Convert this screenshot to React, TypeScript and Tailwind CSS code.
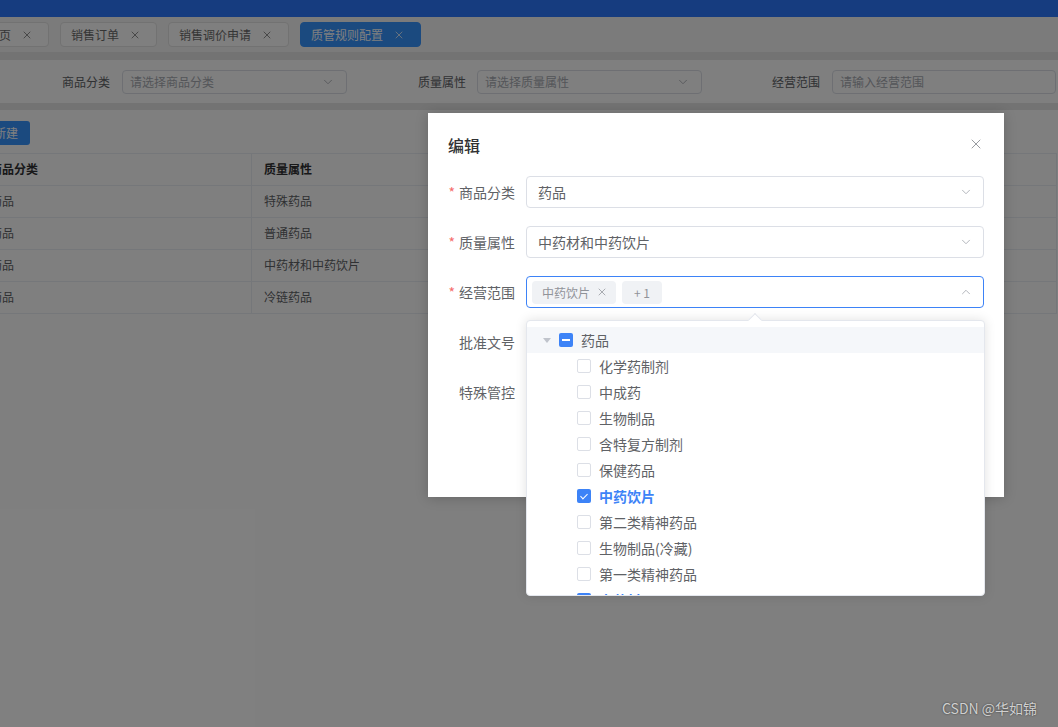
import { ChevronDown, ChevronUp, X } from 'lucide-react'

const tabs = [
  { label: '首页', active: false },
  { label: '销售订单', active: false },
  { label: '销售调价申请', active: false },
  { label: '质管规则配置', active: true },
]

const rows = [
  { category: '药品', quality: '特殊药品' },
  { category: '药品', quality: '普通药品' },
  { category: '药品', quality: '中药材和中药饮片' },
  { category: '药品', quality: '冷链药品' },
]

const scopes = [
  { label: '化学药制剂', checked: false },
  { label: '中成药', checked: false },
  { label: '生物制品', checked: false },
  { label: '含特复方制剂', checked: false },
  { label: '保健药品', checked: false },
  { label: '中药饮片', checked: true },
  { label: '第二类精神药品', checked: false },
  { label: '生物制品(冷藏)', checked: false },
  { label: '第一类精神药品', checked: false },
  { label: '中药材', checked: true },
  { label: '医疗器械', checked: false },
]

function Checkbox({ state }: { state: 'on' | 'off' | 'half' }) {
  if (state === 'off') {
    return <span className="h-[14px] w-[14px] shrink-0 rounded-[2px] border border-[#dcdfe6] bg-white" />
  }
  return (
    <span className="flex h-[14px] w-[14px] shrink-0 items-center justify-center rounded-[2px] bg-[#3d83f7]">
      {state === 'half' ? (
        <span className="h-[2px] w-[8px] bg-white" />
      ) : (
        <span className="mt-[-2px] h-[7px] w-[4px] rotate-45 border-b-[1.5px] border-r-[1.5px] border-white" />
      )}
    </span>
  )
}

function FilterSelect({ placeholder, width }: { placeholder: string; width: string }) {
  return (
    <div className={`flex h-[24px] items-center justify-between rounded-[4px] border border-[#dcdfe6] bg-white pl-[7px] pr-[11px] ${width}`}>
      <span className="text-[12px] leading-[22px] text-[#a8abb2]">{placeholder}</span>
      <ChevronDown size={14} strokeWidth={1.5} className="text-[#a8abb2]" />
    </div>
  )
}

function FormRow({ label, required, children }: { label: string; required?: boolean; children?: React.ReactNode }) {
  return (
    <div className="mb-[18px] flex h-[32px] items-center">
      <div className="w-[78px] shrink-0 pr-[11px] text-right text-[14px] leading-[31px] text-[#606266]">
        {required && <span className="mr-[4px] text-[#f56c6c]">*</span>}
        {label}
      </div>
      <div className="flex-1">{children}</div>
    </div>
  )
}

export default function App() {
  return (
    <div className="relative h-[727px] w-[1058px] overflow-hidden bg-white font-['Noto_Sans_CJK_SC',sans-serif] text-[#606266]">
      {/* top bar */}
      <div className="h-[17px] bg-[#2c78ff]" />

      {/* tabs */}
      <div className="flex h-[35px] items-center bg-[#f6f6f6]">
        <div className="ml-[-24px] flex gap-[11px]">
          {tabs.map((tab) => (
            <div
              key={tab.label}
              className={`flex h-[25px] items-center gap-[10px] rounded-[4px] border pl-[10px] pr-[15px] text-[12px] leading-[22px] ${
                tab.active ? 'border-[#3694ff] bg-[#3694ff] text-white' : 'border-[#e4e4e4] bg-white text-[#6b6b6b]'
              }`}
            >
              <span>{tab.label}</span>
              <X size={12} strokeWidth={1.5} />
            </div>
          ))}
        </div>
      </div>
      <div className="h-[8px] bg-[#e6e6e6]" />

      {/* filters */}
      <div className="flex h-[43px] items-center pl-[62px] text-[12px] text-[#606266]">
        <span className="mr-[12px]">商品分类</span>
        <FilterSelect placeholder="请选择商品分类" width="w-[225px]" />
        <span className="ml-[71px] mr-[11px]">质量属性</span>
        <FilterSelect placeholder="请选择质量属性" width="w-[225px]" />
        <span className="ml-[70px] mr-[12px]">经营范围</span>
        <div className="flex h-[24px] w-[224px] items-center rounded-[4px] border border-[#dcdfe6] bg-white pl-[7px]">
          <span className="text-[12px] leading-[22px] text-[#a8abb2]">请输入经营范围</span>
        </div>
      </div>
      <div className="h-[7px] bg-[#e6e6e6]" />

      {/* content */}
      <div className="pt-[11px]">
        <button className="ml-[-18px] block h-[24px] w-[48px] rounded-[3px] bg-[#3694ff] text-[12px] leading-[22px] text-white">
          新建
        </button>
        <div className="mt-[8px] ml-[-22px] w-[1079px] text-[12px] leading-[29px]">
          <div className="grid h-[33px] grid-cols-[274px_388px_220px_197px] border-y border-[#ebeef5] font-bold text-[#303133]">
            <div className="border-r border-[#ebeef5] px-[12px]">商品分类</div>
            <div className="border-r border-[#ebeef5] px-[12px]">质量属性</div>
            <div className="border-r border-[#ebeef5] px-[12px]">经营范围</div>
            <div className="border-r border-[#ebeef5] px-[12px]">操作</div>
          </div>
          {rows.map((row) => (
            <div key={row.quality} className="grid h-[32px] grid-cols-[274px_388px_220px_197px] border-b border-[#ebeef5]">
              <div className="border-r border-[#ebeef5] px-[12px]">{row.category}</div>
              <div className="border-r border-[#ebeef5] px-[12px]">{row.quality}</div>
              <div className="border-r border-[#ebeef5] px-[12px]">{row.quality}</div>
              <div className="border-r border-[#ebeef5] px-[12px] text-[#409eff]">编辑</div>
            </div>
          ))}
        </div>
      </div>

      {/* mask */}
      <div className="absolute inset-0 bg-black/50" />

      {/* dialog */}
      <div className="absolute left-[428px] top-[113px] h-[384px] w-[576px] bg-white px-[20px] pt-[20px] shadow-[0_1px_12px_rgba(0,0,0,0.2)]">
        <div className="flex h-[24px] items-center justify-between">
          <span className="text-[16px] font-medium leading-[22px] text-[#303133]">编辑</span>
          <X size={16} strokeWidth={1.4} className="mt-[-3px] text-[#909399]" />
        </div>
        <div className="mt-[19px]">
          <FormRow label="商品分类" required>
            <div className="flex h-[32px] items-center justify-between rounded-[4px] border border-[#dcdfe6] pl-[11px] pr-[10px]">
              <span className="text-[14px] leading-[29px] text-[#606266]">药品</span>
              <ChevronDown size={14} strokeWidth={1.5} className="text-[#a8abb2]" />
            </div>
          </FormRow>
          <FormRow label="质量属性" required>
            <div className="flex h-[32px] items-center justify-between rounded-[4px] border border-[#dcdfe6] pl-[11px] pr-[10px]">
              <span className="text-[14px] leading-[29px] text-[#606266]">中药材和中药饮片</span>
              <ChevronDown size={14} strokeWidth={1.5} className="text-[#a8abb2]" />
            </div>
          </FormRow>
          <FormRow label="经营范围" required>
            <div className="flex h-[32px] items-center justify-between rounded-[4px] border border-[#3d83f7] pl-[5px] pr-[10px]">
              <div className="flex items-center gap-[6px]">
                <span className="flex h-[23px] items-center gap-[6px] rounded-[4px] bg-[#f0f2f5] pl-[10px] pr-[8px] text-[12px] leading-[21px] text-[#909399]">
                  中药饮片
                  <X size={12} strokeWidth={1.5} />
                </span>
                <span className="flex h-[23px] w-[40px] items-center justify-center rounded-[4px] bg-[#f0f2f5] text-[12px] leading-[21px] text-[#909399]">
                  + 1
                </span>
              </div>
              <ChevronUp size={14} strokeWidth={1.5} className="text-[#a8abb2]" />
            </div>
          </FormRow>
          <FormRow label="批准文号">
            <div className="h-[32px] rounded-[4px] border border-[#dcdfe6]" />
          </FormRow>
          <FormRow label="特殊管控">
            <div className="h-[32px] rounded-[4px] border border-[#dcdfe6]" />
          </FormRow>
        </div>
        <div className="mt-[20px] flex justify-end gap-[12px]">
          <button className="h-[32px] rounded-[4px] border border-[#dcdfe6] px-[15px] text-[14px]">取消</button>
          <button className="h-[32px] rounded-[4px] bg-[#3d83f7] px-[15px] text-[14px] text-white">确定</button>
        </div>
      </div>

      {/* tree select dropdown */}
      <div className="absolute left-[526px] top-[320px] w-[459px]">
        <div className="h-[276px] overflow-hidden rounded-[4px] border border-[#e4e7ed] bg-white py-[6px] shadow-[0_0_12px_rgba(0,0,0,0.12)]">
          <div className="flex h-[26px] items-center bg-[#f5f7fa] pl-[14px]">
            <span className="flex w-[12px] justify-center">
              <span className="h-0 w-0 border-x-[4px] border-t-[5px] border-x-transparent border-t-[#c0c4cc]" />
            </span>
            <span className="ml-[6px] flex">
              <Checkbox state="half" />
            </span>
            <span className="ml-[8px] text-[14px] leading-[24px] text-[#606266]">药品</span>
          </div>
          {scopes.map((item) => (
            <div key={item.label} className="flex h-[26px] shrink-0 items-center pl-[32px]">
              <span className="w-[12px]" />
              <span className="ml-[6px] flex">
                <Checkbox state={item.checked ? 'on' : 'off'} />
              </span>
              <span
                className={`ml-[8px] text-[14px] leading-[24px] ${
                  item.checked ? 'font-bold text-[#3d83f7]' : 'text-[#606266]'
                }`}
              >
                {item.label}
              </span>
            </div>
          ))}
        </div>
        <div className="absolute left-[224px] top-[-5px] h-[10px] w-[10px] rotate-45 border-l border-t border-[#e4e7ed] bg-white" />
      </div>

      {/* watermark */}
      <div className="absolute left-[942px] top-[698px] text-[14px] leading-[20px] text-[#cfcfcf] [text-shadow:0_0_2px_rgba(0,0,0,0.6)]">
        CSDN @华如锦
      </div>
    </div>
  )
}
